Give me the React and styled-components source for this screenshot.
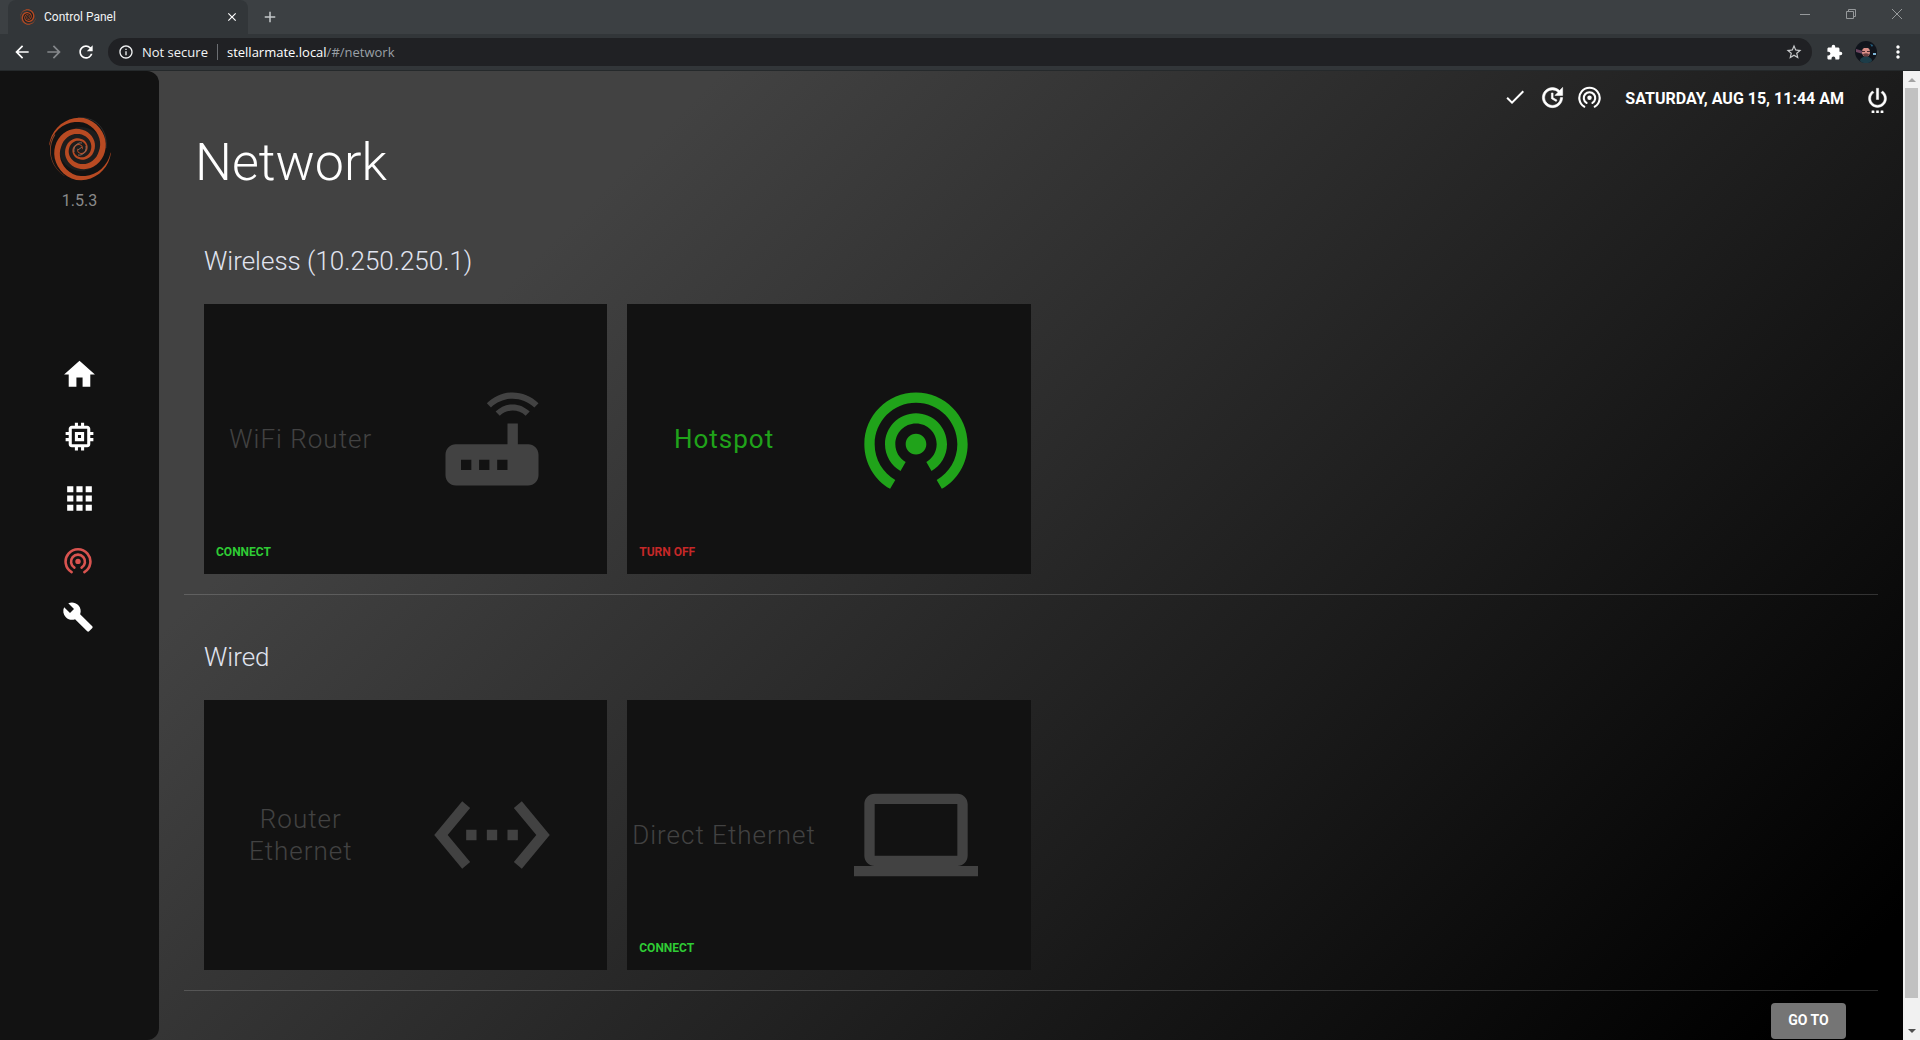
import React from "react";
import styled, { createGlobalStyle } from "styled-components";
import {
  MdCheck, MdWifiTethering, MdHome, MdMemory, MdApps, MdBuild,
  MdRouter, MdSettingsEthernet, MdLaptop, MdStarBorder, MdExtension, MdMoreVert,
  MdArrowBack, MdArrowForward, MdRefresh, MdInfoOutline, MdClose, MdAdd,
} from "react-icons/md";

const Global = createGlobalStyle`
  * { box-sizing: border-box; }
  body { margin: 0; background: #000; font-family: Roboto, "Liberation Sans", sans-serif; overflow: hidden; }
  button { font-family: inherit; border: 0; background: none; padding: 0; cursor: pointer; }
  svg { display: block; flex: none; }
`;

const Window = styled.div`
  height: 100vh;
  display: flex;
  flex-direction: column;
`;

const TabStrip = styled.header`
  display: flex;
  height: 34px;
  flex: none;
  background: #3c4043;
  padding-left: 8px;
`;

const Tab = styled.div`
  display: flex;
  align-items: center;
  width: 240px;
  padding: 0 9px 0 12px;
  gap: 8px;
  background: #323639;
  border-radius: 8px 8px 0 0;
  color: #f1f3f4;
  font: 12px/16px Roboto, sans-serif;
`;

const TabTitle = styled.span`
  flex: 1;
`;

const IconButton = styled.button`
  display: flex;
  align-items: center;
  justify-content: center;
  flex: none;
  width: ${(p) => p.$w || 32}px;
  color: ${(p) => p.$color || "#fff"};
`;

const WindowControls = styled.div`
  display: flex;
  margin-left: auto;
  height: 28px;
`;

const Toolbar = styled.div`
  display: flex;
  align-items: center;
  height: 37px;
  flex: none;
  padding: 0 6px;
  background: #323639;
  border-bottom: 1px solid #25292b;
`;

const AddressBar = styled.form`
  display: flex;
  align-items: center;
  flex: 1;
  height: 28px;
  margin: 0 6px;
  padding: 0 9px 0 10px;
  border-radius: 14px;
  background: #202124;
  color: #f1f3f4;
  font: 13px/20px "Open Sans", sans-serif;
`;

const Security = styled.span`
  margin-left: 8px;
  padding-right: 9px;
  border-right: 1px solid #6b6e72;
  line-height: 16px;
`;

const Url = styled.span`
  flex: 1;
  margin-left: 9px;
  color: #9aa0a6;
  b { font-weight: 400; color: #fff; }
`;

const Viewport = styled.div`
  display: flex;
  flex: 1;
  min-height: 0;
  background: linear-gradient(135deg, #424242 0%, #424242 25%, #000 95%);
`;

const Sidebar = styled.aside`
  display: flex;
  flex-direction: column;
  align-items: center;
  width: 159px;
  flex: none;
  padding-top: 46px;
  background: #121212;
  border-radius: 0 12px 12px 0;
`;

const Version = styled.span`
  margin-top: 8px;
  font-size: 16px;
  line-height: 24px;
  color: #8a8a8a;
`;

const Nav = styled.nav`
  display: flex;
  flex-direction: column;
  align-items: center;
  gap: 25px;
  margin-top: 143px;
`;

const NavLink = styled.a`
  display: flex;
  align-items: center;
  justify-content: center;
  width: 40px;
  height: 37px;
  color: ${(p) => (p.$active ? "#d9534f" : "#fff")};
`;

const NavTail = styled.div`
  display: flex;
  flex-direction: column;
  gap: 19px;
  margin-right: 4px;
`;

const Page = styled.main`
  flex: 1;
  min-width: 0;
  overflow: hidden;
  padding: 10px 12px 0 25px;
`;

const StatusBar = styled.div`
  display: flex;
  align-items: center;
  justify-content: flex-end;
  height: 36px;
  color: #fff;
`;

const StatusIcons = styled.div`
  display: flex;
  align-items: center;
  gap: 12px;
  padding-bottom: 4px;
`;

const Clock = styled.time`
  margin: 0 20px 0 24px;
  font-size: 16px;
  line-height: 24px;
  font-weight: 700;
  text-transform: uppercase;
`;

const Title = styled.h1`
  margin: 14px 0 0 11px;
  font-size: 52px;
  line-height: 64px;
  font-weight: 300;
  color: #fff;
`;

const Section = styled.section`
  margin-right: 13px;
  padding: ${(p) => p.$top}px 1px 20px 20px;
  border-bottom: 1px solid #ffffff29;
`;

const SectionTitle = styled.h2`
  margin: 0 0 25px;
  font-size: 26px;
  line-height: 36px;
  font-weight: 300;
  color: #e0e4f0;
`;

const Cards = styled.div`
  display: grid;
  grid-template-columns: repeat(4, 1fr);
  gap: 20px;
`;

const Card = styled.article`
  display: flex;
  flex-direction: column;
  height: 270px;
  background: #121212;
`;

const CardBody = styled.div`
  display: grid;
  grid-template-columns: 48% 47%;
  align-items: center;
  flex: 1;
  margin-top: 34px;
  color: ${(p) => (p.$on ? "#20a31a" : "#424242")};
  svg { margin: 0 auto; }
`;

const CardTitle = styled.h3`
  margin: 0;
  padding: 0 3px;
  font-size: 26px;
  line-height: 32px;
  font-weight: ${(p) => (p.$on ? 400 : 300)};
  letter-spacing: 1px;
  text-align: center;
`;

const CardFooter = styled.footer`
  height: 34px;
  padding-left: 12px;
`;

const Action = styled.button`
  font-size: 12px;
  line-height: 24px;
  font-weight: 700;
  text-transform: uppercase;
  color: ${(p) => (p.$off ? "#c62828" : "#2fcc35")};
`;

const GoRow = styled.div`
  display: flex;
  justify-content: flex-end;
  padding: 12px 45px 0 0;
`;

const GoButton = styled.button`
  width: 75px;
  height: 36px;
  border-radius: 4px;
  background: #757575;
  color: #fff;
  font-size: 14px;
  line-height: 34px;
  padding-bottom: 2px;
  font-weight: 700;
`;

const ScrollTrack = styled.div`
  display: flex;
  flex-direction: column;
  align-items: center;
  width: 17px;
  flex: none;
  background: #f1f1f1;
`;

const ScrollArrow = styled.svg`
  width: 17px;
  height: 17px;
`;

const ScrollThumb = styled.div`
  width: 13px;
  flex: 1;
  margin-bottom: 25px;
  background: #c1c1c1;
`;

/* Radius and thickness of a galaxy arm, one entry per quarter turn from its tip. */
const ARM_RADIUS = [31, 29, 22, 17, 12.5, 9, 6.5, 4, 2];
const ARM_WIDTH = [0.4, 4.6, 6, 5, 3.4, 2.2, 1.4, 1, 0.8];

const sample = (list, t) => {
  const i = Math.min(Math.floor(t), list.length - 2);
  return list[i] + (list[i + 1] - list[i]) * (t - i);
};

const armPath = (startAngle, shrink = 0, thickness = 1, turns = 8) => {
  const outer = [];
  const inner = [];
  for (let t = 0; t <= turns; t += 0.1) {
    const a = ((startAngle + t * 90) * Math.PI) / 180;
    const r = sample(ARM_RADIUS, t) - shrink;
    const w = (sample(ARM_WIDTH, t) * thickness) / 2;
    const point = (d) => `${(32 + d * Math.cos(a)).toFixed(2)} ${(32 + d * Math.sin(a)).toFixed(2)}`;
    outer.push(point(r + w));
    inner.unshift(point(r - w));
  }
  return `M${outer.concat(inner).join("L")}z`;
};

function Swirl({ size }) {
  return (
    <svg width={size} height={size} viewBox="0 0 64 64" aria-hidden="true">
      <circle cx="33" cy="32" r="22" fill="#1d1d1d" />
      <path fill="none" stroke="#2d2d2d" d="M30 1C47-1 60 12 58 31M36 3c13 3 21 12 20 25" />
      <path fill="#8f4526" d={armPath(120, 0, 0.25, 1)} />
      <path fill="#b84a22" d={armPath(187)} />
      <path fill="#b84a22" d={armPath(7)} />
      <path fill="none" stroke="#8b6a5c" strokeWidth="1" d="M26 35c-1-6 4-10 8-9M38 29c1 6-4 10-8 9M30 33l4-3" />
    </svg>
  );
}

function HotspotGlyph({ size = 28 }) {
  return (
    <svg width={size} height={size} viewBox="0 0 28 28" fill="none" stroke="currentColor" strokeWidth="2.6" strokeLinecap="round" aria-hidden="true">
      <path d="M7.6 25.2a12.4 12.4 0 1 1 12.8 0" />
      <path d="M10.4 20.6a7 7 0 1 1 7.2 0" />
      <circle cx="14" cy="14.4" r="2.7" fill="currentColor" stroke="none" />
    </svg>
  );
}

function UpdateGlyph() {
  return (
    <svg width="27" height="27" viewBox="0 0 24 24" fill="currentColor" stroke="currentColor" strokeWidth="0.5" aria-hidden="true">
      <path d="M21 10.12h-6.78l2.74-2.82c-2.73-2.7-7.15-2.8-9.88-.1-2.73 2.71-2.73 7.08 0 9.79 2.73 2.71 7.15 2.71 9.88 0C18.32 15.65 19 14.08 19 12.1h2c0 1.98-.88 4.55-2.64 6.29-3.51 3.48-9.21 3.48-12.72 0-3.5-3.47-3.53-9.11-.02-12.58 3.51-3.47 9.14-3.47 12.65 0L21 3v7.12zM12.5 8v4.25l3.5 2.08-.72 1.21L11 13V8h1.5z" />
    </svg>
  );
}

function PowerGlyph() {
  return (
    <svg width="27" height="27" viewBox="0 0 24 24" fill="currentColor" stroke="currentColor" strokeWidth="0.4" aria-hidden="true">
      <path d="M7 24h2v-2H7v2zm4 0h2v-2h-2v2zm2-22h-2v10h2V2zm3.56 2.44l-1.45 1.45C16.84 6.94 18 8.83 18 11c0 3.31-2.69 6-6 6s-6-2.69-6-6c0-2.17 1.16-4.06 2.88-5.12L7.44 4.44C5.36 5.88 4 8.28 4 11c0 4.42 3.58 8 8 8s8-3.58 8-8c0-2.72-1.36-5.12-3.44-6.56zM15 24h2v-2h-2v2z" />
    </svg>
  );
}

function Avatar() {
  return (
    <svg width="22" height="22" viewBox="0 0 22 22" aria-hidden="true">
      <circle cx="11" cy="11" r="11" fill="#10141c" />
      <path d="M1 8l7 2v3l-7-2z" fill="#6d4560" />
      <path d="M18 12h3v2h-3z" fill="#7fb6d8" />
      <path d="M15 3l3 1-1 2z" fill="#24678a" />
      <ellipse cx="11" cy="11" rx="4" ry="5" fill="#d98f88" />
      <path d="M7 8c0-5 8-5 8 0l-2-1H9z" fill="#15181f" />
      <path d="M7 10h3v1H7zM12 10h3v1h-3z" fill="#4c2a30" />
      <path d="M8 13c2-1 4-1 6 0l-1 3H9z" fill="#6a3e40" />
      <path d="M5 20c0-6 12-6 12 0-3 3-9 3-12 0z" fill="#1d3d49" />
    </svg>
  );
}

function NetCard({ title, icon: Icon, action, on }) {
  return (
    <Card>
      <CardBody $on={on}>
        <CardTitle $on={on}>{title}</CardTitle>
        <Icon size={124} />
      </CardBody>
      <CardFooter>{action && <Action $off={on}>{action}</Action>}</CardFooter>
    </Card>
  );
}

export default function App() {
  return (
    <Window>
      <Global />
      <TabStrip>
        <Tab>
          <Swirl size={16} />
          <TabTitle>Control Panel</TabTitle>
          <IconButton $w={14} aria-label="Close tab"><MdClose size={14} /></IconButton>
        </Tab>
        <IconButton $w={44} $color="#c4c7ca" aria-label="New tab"><MdAdd size={18} /></IconButton>
        <WindowControls>
          <IconButton $w={46} $color="#96999b" aria-label="Minimize">
            <svg width="10" height="10" stroke="currentColor"><path d="M0 5.5h10" /></svg>
          </IconButton>
          <IconButton $w={46} $color="#96999b" aria-label="Restore">
            <svg width="10" height="10" fill="none" stroke="currentColor"><path d="M.5 2.5h7v7h-7zM2.5 2.5v-2h7v7h-2" /></svg>
          </IconButton>
          <IconButton $w={46} $color="#96999b" aria-label="Close">
            <svg width="10" height="10" stroke="currentColor"><path d="M0 0l10 10M10 0L0 10" /></svg>
          </IconButton>
        </WindowControls>
      </TabStrip>
      <Toolbar>
        <IconButton aria-label="Back"><MdArrowBack size={20} /></IconButton>
        <IconButton $color="#85888b" aria-label="Forward"><MdArrowForward size={20} /></IconButton>
        <IconButton aria-label="Reload"><MdRefresh size={20} /></IconButton>
        <AddressBar>
          <MdInfoOutline size={16} />
          <Security>Not secure</Security>
          <Url><b>stellarmate.local</b>/#/network</Url>
          <MdStarBorder size={18} color="#c8cacc" />
        </AddressBar>
        <IconButton aria-label="Extensions"><MdExtension size={17} /></IconButton>
        <IconButton aria-label="Profile"><Avatar /></IconButton>
        <IconButton aria-label="Menu"><MdMoreVert size={20} /></IconButton>
      </Toolbar>
      <Viewport>
        <Sidebar>
          <Swirl size={64} />
          <Version>1.5.3</Version>
          <Nav>
            <NavLink href="#home" aria-label="Home"><MdHome size={37} /></NavLink>
            <NavLink href="#system" aria-label="System"><MdMemory size={37} /></NavLink>
            <NavLink href="#apps" aria-label="Apps"><MdApps size={37} /></NavLink>
            <NavTail>
              <NavLink $active href="#network" aria-label="Network"><HotspotGlyph /></NavLink>
              <NavLink href="#tools" aria-label="Tools"><MdBuild size={32} /></NavLink>
            </NavTail>
          </Nav>
        </Sidebar>
        <Page>
          <StatusBar>
            <StatusIcons>
              <MdCheck size={24} />
              <UpdateGlyph />
              <HotspotGlyph size={23} />
            </StatusIcons>
            <Clock>Saturday, Aug 15, 11:44 AM</Clock>
            <IconButton $w={27} aria-label="Power"><PowerGlyph /></IconButton>
          </StatusBar>
          <Title>Network</Title>
          <Section $top={48}>
            <SectionTitle>Wireless (10.250.250.1)</SectionTitle>
            <Cards>
              <NetCard title="WiFi Router" icon={MdRouter} action="Connect" />
              <NetCard title="Hotspot" icon={MdWifiTethering} action="Turn off" on />
            </Cards>
          </Section>
          <Section $top={44}>
            <SectionTitle>Wired</SectionTitle>
            <Cards>
              <NetCard title="Router Ethernet" icon={MdSettingsEthernet} />
              <NetCard title="Direct Ethernet" icon={MdLaptop} action="Connect" />
            </Cards>
          </Section>
          <GoRow><GoButton>GO TO</GoButton></GoRow>
        </Page>
        <ScrollTrack>
          <ScrollArrow><path d="M5 11l4-4 4 4z" fill="#a3a3a3" /></ScrollArrow>
          <ScrollThumb />
          <ScrollArrow><path d="M5 6l4 4 4-4z" fill="#505050" /></ScrollArrow>
        </ScrollTrack>
      </Viewport>
    </Window>
  );
}
